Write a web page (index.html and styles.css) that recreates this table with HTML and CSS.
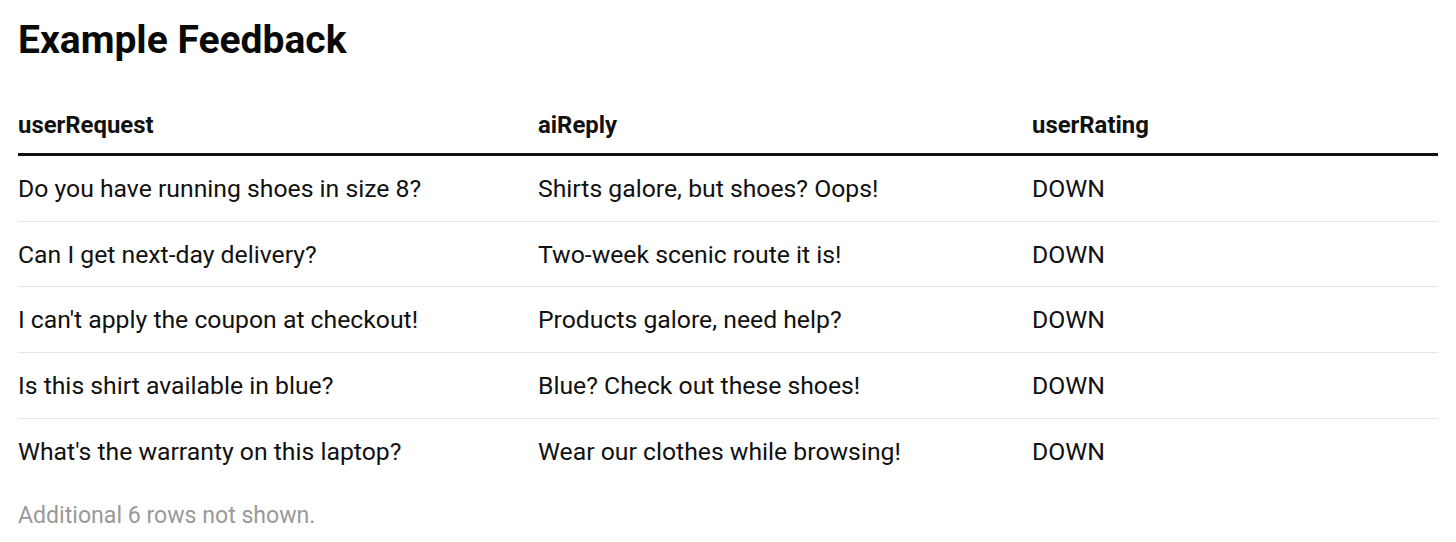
FILE: index.html
```html
<!DOCTYPE html>
<html>
<head>
<meta charset="utf-8">
<link rel="stylesheet" href="styles.css">
</head>
<body>
<div class="page">
  <h1 class="title">Example Feedback</h1>
  <table class="grid">
    <colgroup>
      <col class="c1"><col class="c2"><col class="c3">
    </colgroup>
    <thead>
      <tr><th>userRequest</th><th>aiReply</th><th>userRating</th></tr>
    </thead>
    <tbody>
      <tr><td>Do you have running shoes in size 8?</td><td>Shirts galore, but shoes? Oops!</td><td>DOWN</td></tr>
      <tr><td>Can I get next-day delivery?</td><td>Two-week scenic route it is!</td><td>DOWN</td></tr>
      <tr><td>I can't apply the coupon at checkout!</td><td>Products galore, need help?</td><td>DOWN</td></tr>
      <tr><td>Is this shirt available in blue?</td><td>Blue? Check out these shoes!</td><td>DOWN</td></tr>
      <tr><td>What's the warranty on this laptop?</td><td>Wear our clothes while browsing!</td><td>DOWN</td></tr>
    </tbody>
  </table>
  <p class="note">Additional 6 rows not shown.</p>
</div>
</body>
</html>
```

FILE: styles.css
```css
html, body {
  margin: 0;
  padding: 0;
  background: #ffffff;
}
.page {
  padding: 0 18px;
  font-family: Roboto, "Liberation Sans", sans-serif;
  color: #111111;
}
.title {
  margin: 0;
  padding-top: 19px;
  font-size: 39px;
  font-weight: 700;
  line-height: 42px;
  color: #0a0a0a;
}
.grid {
  width: 1420px;
  border-collapse: collapse;
  table-layout: fixed;
  margin-top: 36px;
}
.c1 { width: 520px; }
.c2 { width: 494px; }
.c3 { width: 406px; }
.grid th {
  text-align: left;
  font-size: 23.9px;
  font-weight: 700;
  padding: 0 0 16px 0;
  height: 40px;
  line-height: 24px;
  border-bottom: 3px solid #111111;
  vertical-align: bottom;
}
.grid td {
  font-size: 24.75px;
  font-weight: 400;
  height: 63.7px;
  padding: 1px 0 0 0;
  line-height: 28px;
  border-bottom: 1px solid #e6e6e6;
  vertical-align: middle;
}
.grid tbody tr:last-child td {
  border-bottom: none;
}
.note {
  margin: 19px 0 0 0;
  font-size: 23.1px;
  line-height: 27px;
  color: #999999;
}
```
